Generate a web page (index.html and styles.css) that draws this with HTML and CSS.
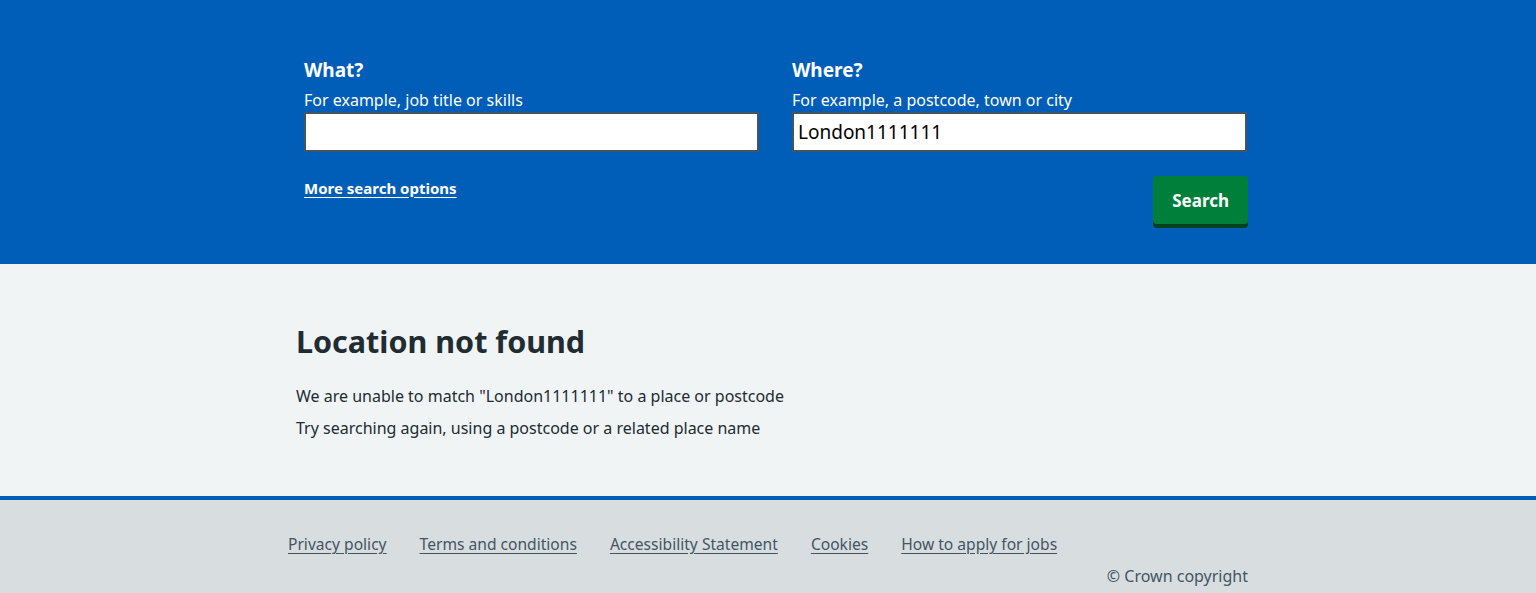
FILE: index.html
```html
<!DOCTYPE html>
<html lang="en">
<head>
<meta charset="utf-8">
<title>Location not found</title>
<link rel="stylesheet" href="styles.css">
</head>
<body>
<header class="search">
  <form class="search-form">
    <div class="fields">
      <div class="field">
        <label class="label" for="what">What?</label>
        <div class="hint">For example, job title or skills</div>
        <input class="input" id="what" type="text" value="">
      </div>
      <div class="field">
        <label class="label" for="where">Where?</label>
        <div class="hint">For example, a postcode, town or city</div>
        <input class="input" id="where" type="text" value="London1111111">
      </div>
    </div>
    <div class="actions">
      <a class="more" href="#">More search options</a>
      <button class="button" type="button">Search</button>
    </div>
  </form>
</header>
<main class="main">
  <div class="main-inner">
    <h1 class="title">Location not found</h1>
    <p class="body">We are unable to match "London1111111" to a place or postcode</p>
    <p class="body">Try searching again, using a postcode or a related place name</p>
  </div>
</main>
<footer class="footer">
  <div class="footer-inner">
    <ul class="links">
      <li><a href="#">Privacy policy</a></li>
      <li><a href="#">Terms and conditions</a></li>
      <li><a href="#">Accessibility Statement</a></li>
      <li><a href="#">Cookies</a></li>
      <li><a href="#">How to apply for jobs</a></li>
    </ul>
    <p class="copy">© Crown copyright</p>
  </div>
</footer>
</body>
</html>
```
FILE: styles.css
```css
* { box-sizing: border-box; }
html, body { margin: 0; padding: 0; }
body {
  font-family: "Noto Sans", "Open Sans", sans-serif;
  color: #212b32;
  background: #d8dde0;
}
.search {
  background: #005eb8;
  color: #fff;
  padding: 58px 0 40px;
}
.search-form {
  width: 944px;
  margin: 0 0 0 304px;
}
.fields {
  display: flex;
  gap: 33px;
}
.field {
  width: 455px;
  display: flex;
  flex-direction: column;
}
.label {
  font-weight: 700;
  font-size: 19px;
  line-height: 24px;
  margin-bottom: 7px;
}
.hint {
  font-size: 16px;
  line-height: 22px;
  margin-bottom: 1px;
}
.input {
  height: 40px;
  width: 100%;
  border: 2px solid #425563;
  background: #fff;
  font-family: inherit;
  font-size: 19px;
  padding: 0 4px;
  color: #000;
  outline: none;
}
.actions {
  display: flex;
  justify-content: space-between;
  align-items: flex-start;
  margin-top: 24px;
}
.more {
  color: #fff;
  font-weight: 700;
  font-size: 15px;
  line-height: 24px;
  text-decoration: underline;
  text-underline-offset: 3px;
}
.button {
  background: #007f3b;
  color: #fff;
  border: 0;
  border-radius: 4px;
  box-shadow: 0 4px 0 #00401e;
  font-family: inherit;
  font-weight: 700;
  font-size: 17px;
  height: 48px;
  padding: 0 19px;
  cursor: pointer;
}
.main {
  background: #f0f4f5;
  border-bottom: 4px solid #005eb8;
}
.main-inner {
  margin-left: 296px;
  padding: 57px 0 48px;
}
.title {
  font-size: 30.5px;
  line-height: 40px;
  font-weight: 700;
  margin: 0 0 23px;
}
.body {
  font-size: 16px;
  line-height: 24px;
  margin: 0 0 8px;
}
.footer {
  background: #d8dde0;
}
.footer-inner {
  width: 960px;
  margin: 0 auto;
  padding: 32px 0 8px;
}
.links {
  list-style: none;
  margin: 0;
  padding: 0;
  display: flex;
  gap: 33px;
}
.links a {
  color: #425563;
  font-size: 15.6px;
  line-height: 24px;
  text-decoration: underline;
  text-underline-offset: 3px;
}
.copy {
  margin: 8px 0 0;
  text-align: right;
  color: #425563;
  font-size: 16px;
  line-height: 24px;
}
```
